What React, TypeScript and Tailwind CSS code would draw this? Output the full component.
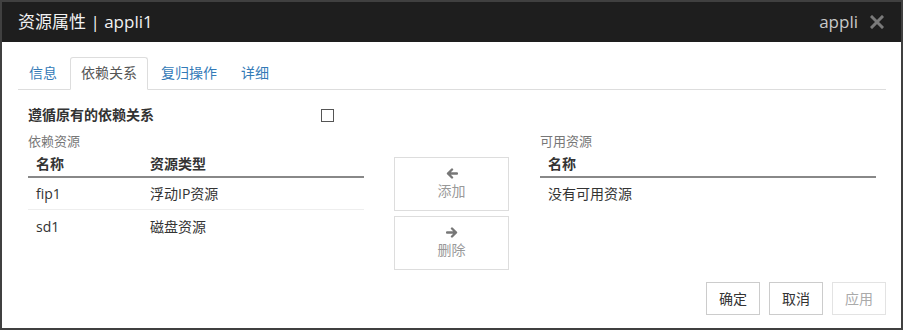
const tabs = [
  { label: "信息", active: false },
  { label: "依赖关系", active: true },
  { label: "复归操作", active: false },
  { label: "详细", active: false },
];

const deps = [
  { name: "fip1", type: "浮动IP资源" },
  { name: "sd1", type: "磁盘资源" },
];

const font = "font-['Open_Sans','Noto_Sans_CJK_SC',sans-serif]";

function CloseIcon() {
  return (
    <svg width="14" height="14" viewBox="0 0 14 14" className="text-[#7a7a7a]">
      <path d="M2 2 L12 12 M12 2 L2 12" stroke="currentColor" strokeWidth="3" strokeLinecap="square" />
    </svg>
  );
}

function Arrow({ dir }: { dir: "left" | "right" }) {
  return (
    <svg width="12" height="11" viewBox="0 0 12 11" className="text-[#777]">
      <g transform={dir === "right" ? "scale(-1,1) translate(-12,0)" : undefined}>
        <path
          d="M6 1.5 L2 5.5 L6 9.5 M2 5.5 H11"
          fill="none"
          stroke="currentColor"
          strokeWidth="2.4"
          strokeLinecap="round"
          strokeLinejoin="round"
        />
      </g>
    </svg>
  );
}

export default function App() {
  return (
    <div className={`${font} flex h-[330px] w-[903px] flex-col border-2 border-[#404040] bg-white text-[14px] text-[#333]`}>
      {/* header */}
      <div className="flex h-[40px] shrink-0 items-center justify-between bg-[#1e1e1e] pl-[16px] pr-[17px]">
        <span className="text-[17px] text-[#f2f2f2]">资源属性 | appli1</span>
        <div className="flex items-center gap-[12px]">
          <span className="text-[17px] text-[#c8c8c8]">appli</span>
          <CloseIcon />
        </div>
      </div>

      <div className="flex flex-1 flex-col pl-[16px] pr-[15px] pt-[15px]">
        {/* tabs */}
        <div className="flex border-b border-[#ddd]">
          {tabs.map((t) => (
            <div
              key={t.label}
              className={
                t.active
                  ? "-mb-px mr-[2px] rounded-t-[3px] border border-[#ddd] border-b-white bg-white px-[10px] py-[5px] leading-[20px] text-[#555]"
                  : "mr-[2px] border border-transparent px-[10px] py-[5px] leading-[20px] text-[#337ab7]"
              }
            >
              {t.label}
            </div>
          ))}
        </div>

        <div className="px-[10px]">
          {/* follow option */}
          <div className="mt-[15px] flex h-[20px] items-center">
            <span className="w-[293px] font-bold leading-[20px]">遵循原有的依赖关系</span>
            <span className="h-[13px] w-[13px] border-[1.5px] border-[#555]" />
          </div>

          {/* lists */}
          <div className="mt-[7px] flex h-[138px] items-start">
            <div className="w-[336px]">
              <div className="h-[18px] text-[13px] leading-[18px] text-[#777]">依赖资源</div>
              <div className="flex h-[28px] items-center border-b-2 border-[#888] px-[8px] font-bold">
                <span className="w-[114px]">名称</span>
                <span>资源类型</span>
              </div>
              {deps.map((d, i) => (
                <div
                  key={d.name}
                  className={`flex h-[32px] items-center px-[8px] ${i === 0 ? "border-b border-[#eee]" : ""}`}
                >
                  <span className="w-[114px]">{d.name}</span>
                  <span>{d.type}</span>
                </div>
              ))}
            </div>

            <div className="ml-[30px] mt-[25px] flex w-[115px] flex-col gap-[5px]">
              <button className="flex h-[54px] flex-col items-center justify-center gap-[3px] border border-[#ddd] bg-white text-[#999]">
                <Arrow dir="left" />
                <span className="leading-[18px]">添加</span>
              </button>
              <button className="flex h-[54px] flex-col items-center justify-center gap-[3px] border border-[#ddd] bg-white text-[#999]">
                <Arrow dir="right" />
                <span className="leading-[18px]">删除</span>
              </button>
            </div>

            <div className="ml-[31px] w-[336px]">
              <div className="h-[18px] text-[13px] leading-[18px] text-[#777]">可用资源</div>
              <div className="flex h-[28px] items-center border-b-2 border-[#888] px-[8px] font-bold">
                <span>名称</span>
              </div>
              <div className="flex h-[30px] items-center px-[8px]">没有可用资源</div>
            </div>
          </div>
        </div>

        {/* footer */}
        <div className="mt-[12px] flex justify-end gap-[9px]">
          <button className="h-[33px] w-[54px] border border-[#ccc] bg-white text-[#333]">确定</button>
          <button className="h-[33px] w-[54px] border border-[#ccc] bg-white text-[#333]">取消</button>
          <button className="h-[33px] w-[54px] border border-[#e3e3e3] bg-white text-[#aaa]">应用</button>
        </div>
      </div>
    </div>
  );
}
